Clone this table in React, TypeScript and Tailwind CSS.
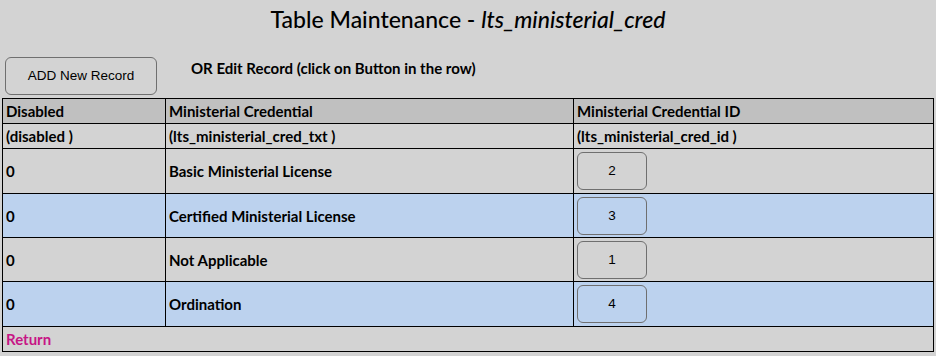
const rows = [
  { disabled: '0', txt: 'Basic Ministerial License', id: '2', h: 'h-[45px]' },
  { disabled: '0', txt: 'Certified Ministerial License', id: '3', h: 'h-[44px]' },
  { disabled: '0', txt: 'Not Applicable', id: '1', h: 'h-[44px]' },
  { disabled: '0', txt: 'Ordination', id: '4', h: 'h-[45px]' },
]

export default function App() {
  return (
    <div className="h-[356px] w-[936px] bg-[#d3d3d3] font-['Lato',sans-serif] text-[15px] text-black">
      {/* Title */}
      <h1 className="pt-[5px] text-center text-[23px] font-medium leading-[28px]">
        Table Maintenance - <i>lts_ministerial_cred</i>
      </h1>

      {/* Toolbar */}
      <div className="mt-[24px] flex items-start">
        <button className="ml-[5px] h-[38px] w-[152px] rounded-[6px] border border-[#6f6f6f] bg-[#d3d3d3] font-['Liberation_Sans',sans-serif] text-[13.5px]">
          ADD New Record
        </button>
        <span className="ml-[34px] mt-[1px] font-bold leading-[20px]">
          OR Edit Record (click on Button in the row)
        </span>
      </div>

      {/* Table */}
      <table className="ml-[2px] mt-[3px] w-[932px] table-fixed border-collapse font-bold leading-[18px]">
        <colgroup>
          <col className="w-[163px]" />
          <col className="w-[408px]" />
          <col />
        </colgroup>
        <tbody>
          <tr className="h-[25px] bg-[#c0c0c0]">
            <td className="border border-black px-[3px]">Disabled</td>
            <td className="border border-black px-[3px]">Ministerial Credential</td>
            <td className="border border-black px-[3px]">Ministerial Credential ID</td>
          </tr>
          <tr className="h-[25px]">
            <td className="border border-black px-[3px]">(disabled )</td>
            <td className="border border-black px-[3px]">(lts_ministerial_cred_txt )</td>
            <td className="border border-black px-[3px]">(lts_ministerial_cred_id )</td>
          </tr>
          {rows.map((r, i) => (
            <tr key={r.id} className={i % 2 === 1 ? `${r.h} bg-[#bcd2ee]` : r.h}>
              <td className="border border-black px-[3px]">{r.disabled}</td>
              <td className="border border-black px-[3px]">{r.txt}</td>
              <td className="border border-black px-[3px] py-0">
                <button className="h-[38px] w-[70px] rounded-[6px] border border-[#6f6f6f] font-['Liberation_Sans',sans-serif] text-[13.5px] font-normal">
                  {r.id}
                </button>
              </td>
            </tr>
          ))}
          <tr className="h-[25px]">
            <td colSpan={3} className="border border-black px-[3px] text-[#c71585]">
              Return
            </td>
          </tr>
        </tbody>
      </table>
    </div>
  )
}
